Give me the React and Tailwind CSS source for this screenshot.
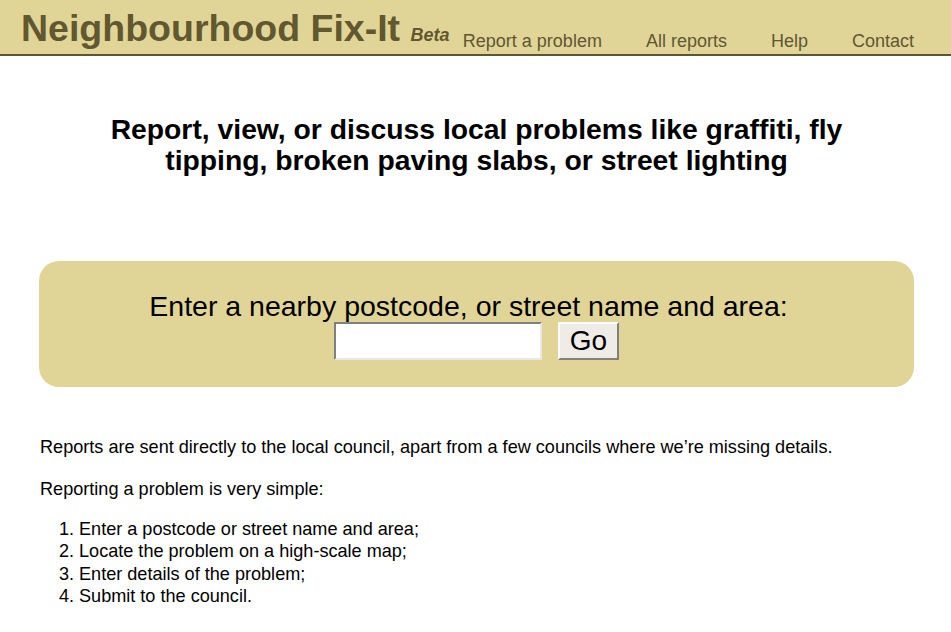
import React from 'react'

const NAV = ['Report a problem', 'All reports', 'Help', 'Contact']

const STEPS = [
  'Enter a postcode or street name and area;',
  'Locate the problem on a high-scale map;',
  'Enter details of the problem;',
  'Submit to the council.',
]

const App = () => {
  return (
    <div className="min-h-[632px] bg-white font-['Liberation_Sans',Arial,sans-serif] text-black">
      <header className="flex h-[56px] border-b-2 border-[#5e5530] bg-[#e0d597] pl-[21px] pr-[37px]">
        <h1 className="pt-[10px] text-[37.5px] font-bold leading-[37px] text-[#615830] whitespace-nowrap">
          Neighbourhood Fix-It <span className="text-[18px] italic">Beta</span>
        </h1>
        <nav className="ml-auto flex gap-[44px] pt-[31px] text-[18px] leading-[20px] text-[#5f5734]">
          {NAV.map((item) => (
            <a key={item} href="#" className="whitespace-nowrap">{item}</a>
          ))}
        </nav>
      </header>

      <main className="mx-[39px] w-[875px]">
        <h2 className="mt-[58px] px-12 text-center text-[28.3px] font-bold leading-[31px]">
          Report, view, or discuss local problems like graffiti, fly tipping, broken paving slabs, or street lighting
        </h2>

        <form className="mt-[85px] flex h-[126px] flex-col items-center rounded-[20px] bg-[#e0d597] pt-[29px]">
          <label className="pr-[16px] text-[28.5px] leading-[32px]">
            Enter a nearby postcode, or street name and area:
          </label>
          <div className="flex gap-4">
            <input
              type="text"
              className="h-[38px] w-[208px] border-2 border-solid border-t-[#808080] border-l-[#808080] border-b-[#e8e8e8] border-r-[#e8e8e8] bg-white outline-none"
            />
            <button
              type="button"
              className="h-[38px] w-[61px] border-2 border-solid border-t-[#fafafa] border-l-[#fafafa] border-b-[#808080] border-r-[#808080] bg-[#efece8] text-[28px] leading-[30px]"
            >
              Go
            </button>
          </div>
        </form>

        <div className="text-[18.1px] leading-[22px]">
          <p className="mt-[49px] ml-[1px]">
            Reports are sent directly to the local council, apart from a few councils where we’re missing details.
          </p>
          <p className="mt-[20px] ml-[1px]">Reporting a problem is very simple:</p>
          <ol className="mt-[18px] list-decimal pl-[40px]">
            {STEPS.map((step) => (
              <li key={step} className="leading-[22.3px]">{step}</li>
            ))}
          </ol>
        </div>
      </main>
    </div>
  )
}

export default App
